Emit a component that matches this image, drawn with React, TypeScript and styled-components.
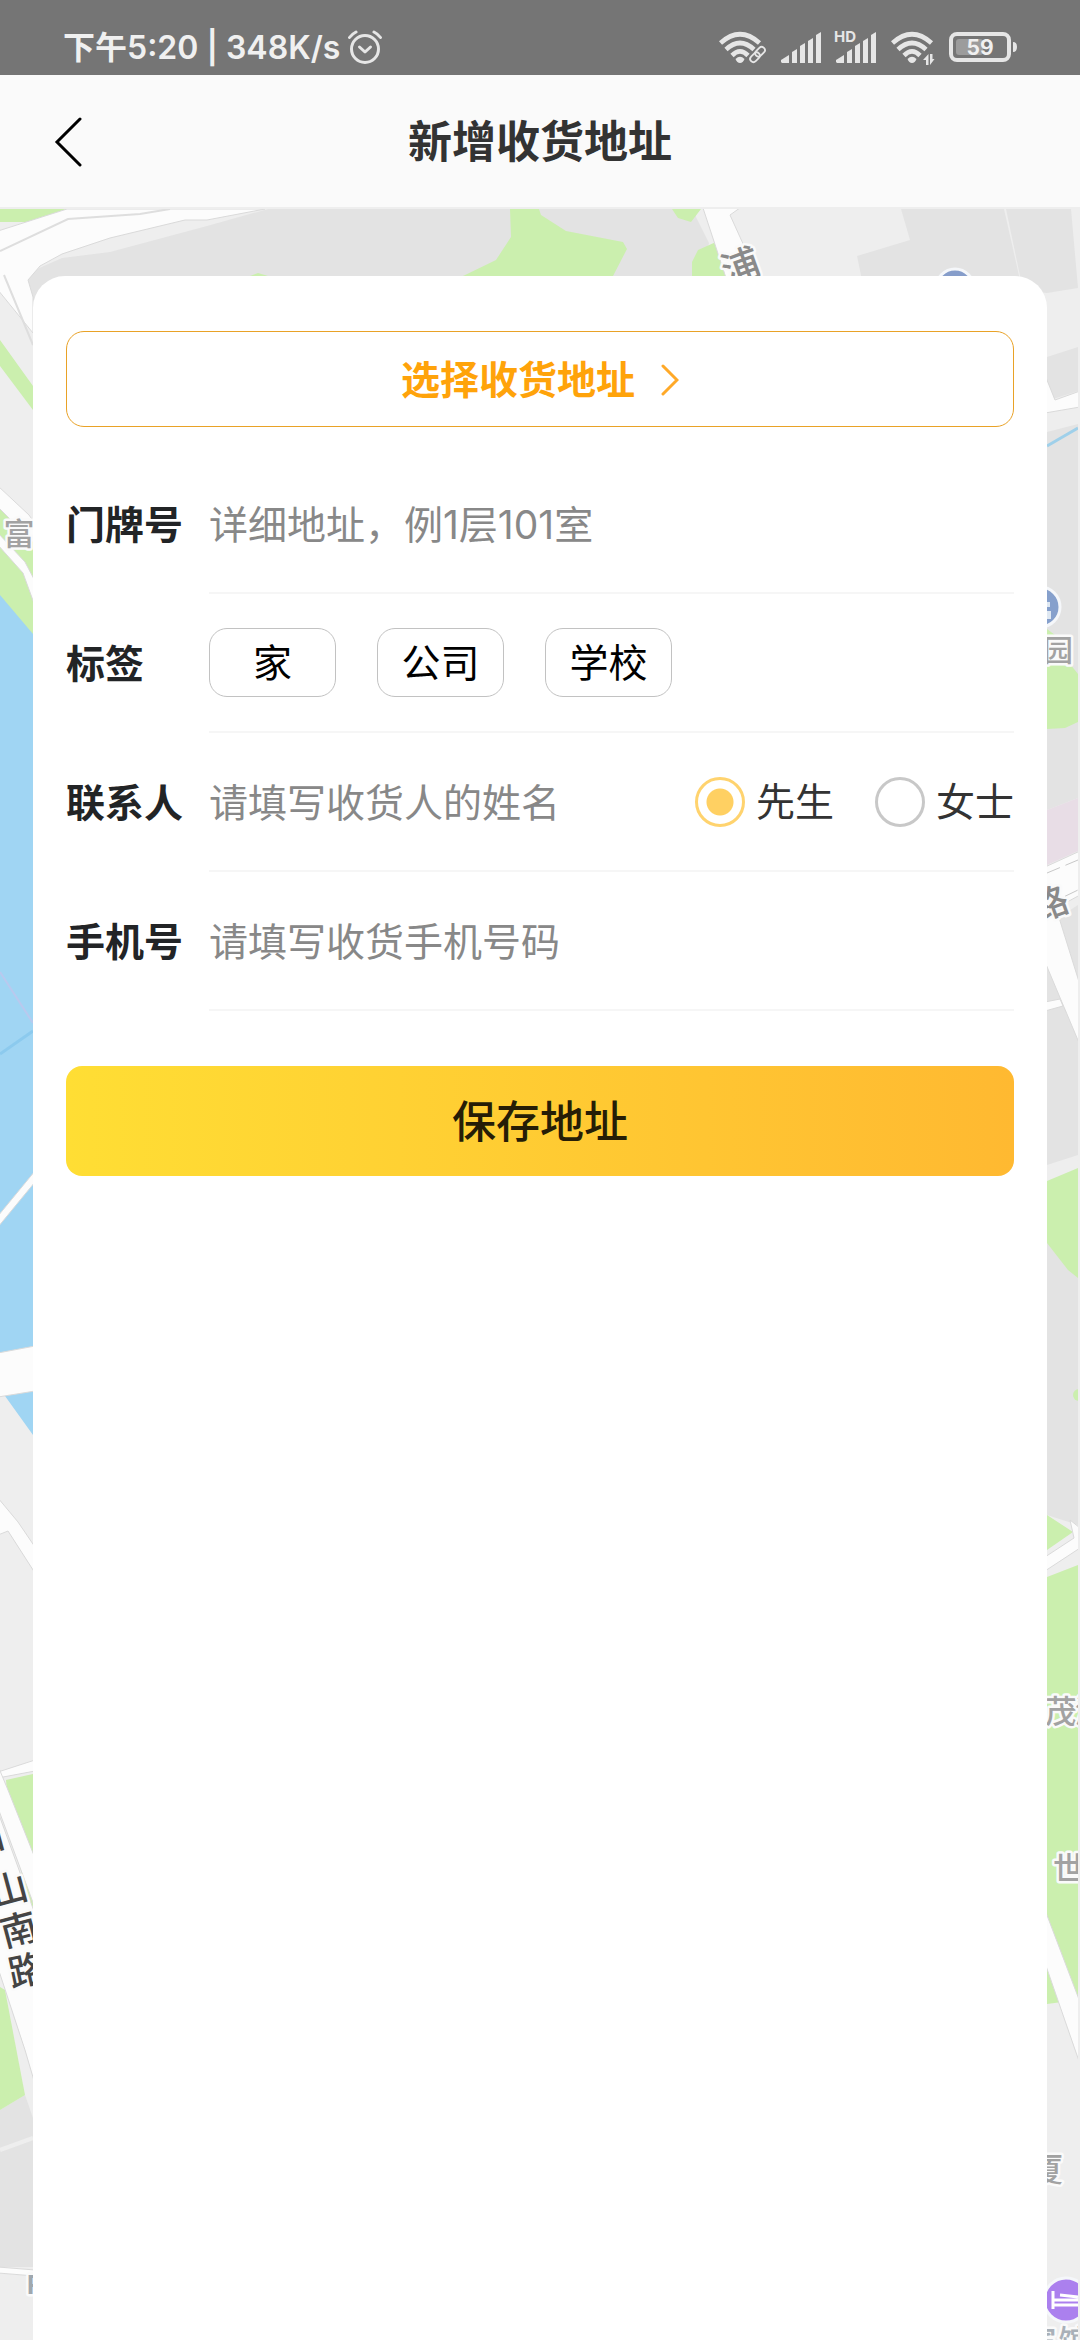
import { useState } from "react";
import styled, { createGlobalStyle } from "styled-components";

const GlobalStyle = createGlobalStyle`
  * {
    box-sizing: border-box;
  }
  body {
    margin: 0;
    background: #eeeeee;
    font-family: Inter, "Noto Sans CJK SC", sans-serif;
  }
  button, input {
    font-family: inherit;
  }
`;

const Page = styled.div`
  min-height: 100vh;
  display: flex;
  flex-direction: column;
`;

const StatusBar = styled.div`
  height: 75px;
  padding: 20px 63px 0;
  display: flex;
  align-items: center;
  justify-content: space-between;
  background: #757575;
  color: #f0f0f0;
`;

const StatusGroup = styled.div<{ $gap: number }>`
  display: flex;
  align-items: center;
  gap: ${({ $gap }) => $gap}px;
`;

const StatusText = styled.span`
  font-size: 32px;
  line-height: 40px;
  font-weight: 600;
  white-space: pre;
`;

const Header = styled.header`
  height: 134px;
  padding: 2px 40px 0;
  display: grid;
  grid-template-columns: 1fr auto 1fr;
  align-items: center;
  background: #fafafa;
  border-bottom: 2px solid #eeeeee;
`;

const BackButton = styled.button`
  width: 56px;
  height: 64px;
  padding: 0;
  border: none;
  background: none;
  display: flex;
  align-items: center;
  justify-content: center;
`;

const Title = styled.h1`
  margin: 0;
  font-size: 44px;
  line-height: 64px;
  font-weight: 700;
  color: #333333;
`;

const MapArea = styled.div`
  position: relative;
  flex: 1;
  display: flex;
  flex-direction: column;
  padding: 67px 33px 0;
  overflow: hidden;
`;

const MapSvg = styled.svg`
  position: absolute;
  top: 0;
  left: 0;
  width: 100%;
  height: 100%;
  font-family: "Noto Sans CJK SC", sans-serif;
`;

const Card = styled.form`
  position: relative;
  flex: 1;
  padding: 55px 33px;
  background: #ffffff;
  border-radius: 32px 32px 0 0;
`;

const SelectButton = styled.button`
  width: 100%;
  height: 96px;
  padding: 2px 0 0;
  margin-bottom: 28px;
  display: flex;
  align-items: center;
  justify-content: center;
  gap: 26px;
  border: 1px solid #e9a227;
  border-radius: 18px;
  background: #ffffff;
  color: #ffa30a;
  font-size: 39px;
  line-height: 56px;
  font-weight: 700;
`;

const Row = styled.div`
  height: 139px;
  display: flex;
`;

const RowLabel = styled.label`
  width: 143px;
  display: flex;
  align-items: center;
  font-size: 39px;
  line-height: 56px;
  font-weight: 700;
  color: #222426;
`;

const Field = styled.div<{ $gap?: number }>`
  flex: 1;
  min-width: 0;
  display: flex;
  align-items: center;
  gap: ${({ $gap }) => $gap || 0}px;
  border-bottom: 2px solid #f6f6f6;
`;

const TextInput = styled.input`
  flex: 1;
  min-width: 0;
  height: 80px;
  padding: 2px 0 0;
  border: none;
  outline: none;
  background: none;
  font-size: 39px;
  color: #222426;
  &::placeholder {
    color: #888888;
    opacity: 1;
  }
`;

const TagButton = styled.button<{ $active: boolean }>`
  width: 127px;
  height: 69px;
  padding: 0;
  border: 1px solid ${({ $active }) => ($active ? "#ffd064" : "#c2c2c2")};
  border-radius: 18px;
  background: #ffffff;
  color: #000000;
  font-size: 39px;
  line-height: 56px;
`;

const RadioLabel = styled.label`
  display: flex;
  align-items: center;
  gap: 11px;
  font-size: 39px;
  line-height: 56px;
  color: #333333;
`;

const Radio = styled.input`
  appearance: none;
  width: 50px;
  height: 50px;
  margin: 0;
  border: 3px solid #c8c8c8;
  border-radius: 50%;
  background: #ffffff;
  &:checked {
    border-color: #ffd36e;
    background: radial-gradient(circle, #ffd062 13px, #ffffff 14px);
  }
`;

const SaveButton = styled.button`
  width: 100%;
  height: 110px;
  padding: 2px 0 0;
  margin-top: 55px;
  border: none;
  border-radius: 16px;
  background: linear-gradient(90deg, #ffde34, #ffb931);
  color: #261d06;
  font-size: 44px;
  line-height: 64px;
  font-weight: 500;
`;

const AlarmIcon = () => (
  <svg width="36" height="36" viewBox="0 0 36 36" fill="none" stroke="#e6e6e6" strokeWidth="3" strokeLinecap="round">
    <circle cx="18" cy="19" r="13.5" />
    <path d="M12.5 17l5.5 5 5.5-5" strokeLinejoin="round" />
    <path d="M2.5 7.5Q5 4 9 2M33.5 7.5Q31 4 27 2" />
  </svg>
);

const WifiArcs = () => (
  <>
    <g fill="none" stroke="#e6e6e6" strokeWidth="4.6">
      <path d="M1.5 12Q21 -5.5 40.500 12" />
      <path d="M7 18.500Q21 5.500 35 18.500" />
      <path d="M13 24.500Q21 16.500 29 24.500" />
    </g>
    <path d="M16.500 28Q21 23.500 25.500 28Q24 32 21 32Q18 32 16.500 28z" fill="#e6e6e6" />
  </>
);

const WifiLinkIcon = () => (
  <svg width="48" height="34" viewBox="0 0 48 34">
    <WifiArcs />
    <path d="M31 33L46 18" stroke="#757575" strokeWidth="11" strokeLinecap="round" />
    <g fill="none" stroke="#e6e6e6" strokeWidth="1.8">
      <rect x="35.500" y="17.500" width="11" height="6.500" rx="3.200" transform="rotate(-45 41 20.700)" />
      <rect x="30.500" y="23" width="11" height="6.500" rx="3.200" transform="rotate(-45 36 26.200)" />
    </g>
  </svg>
);

const WifiDataIcon = () => (
  <svg width="44" height="34" viewBox="0 0 44 34">
    <WifiArcs />
    <path d="M31 23h13v11h-13z" fill="#757575" />
    <path d="M35 34h2.500v-11l-5.500 6h3zM39 23h2.500v5h2l-4.500 6z" fill="#e6e6e6" />
  </svg>
);

const SignalIcon = ({ hd }: { hd?: boolean }) => (
  <svg width="41" height="34" viewBox="0 0 41 34" fill="#e6e6e6" overflow="visible">
    <path d="M0 31v-2l8-5v8h-7z" />
    <path d="M11 32v-11l5-3v14z" />
    <path d="M19 32v-17l5-3v20z" />
    <path d="M27 32v-22l5-3v25z" />
    <path d="M35 32v-28l5-3v31z" />
    {hd && (
      <>
        <path d="M-3 -1h25v13h-5v3h-20z" fill="#757575" />
        <text x="-2" y="11" fontSize="15" fontWeight="700">
          HD
        </text>
      </>
    )}
  </svg>
);

const BatteryIcon = () => (
  <svg width="68" height="34" viewBox="0 0 68 34">
    <rect x="2" y="3" width="58" height="26" rx="6" fill="none" stroke="#e6e6e6" strokeWidth="4" />
    <rect x="7" y="8" width="27" height="16" rx="3" fill="#9c9c9c" />
    <path d="M64 11q4 0 4 5t-4 5z" fill="#e6e6e6" />
    <text x="31" y="24" fontSize="21" fontWeight="700" textAnchor="middle" fill="#f0f0f0">
      59
    </text>
  </svg>
);

// 卡片后面的地图
const MapBackground = () => (
  <MapSvg viewBox="0 209 1080 2131" preserveAspectRatio="xMidYMin slice" aria-hidden="true">
    <rect x="0" y="209" width="1080" height="2131" fill="#eeeeee" />

    <g fill="#e3e3e3">
      <path d="M268 209L207 226L110 252L62 258L28 273L26 300H700V276L709 243L696 217V209z" />
      <path d="M901 209L910 240L857 256L862 280H1020L1004 209zM1006 209L1023 290L1047 293L1078 288L1071 209z" />
      <path d="M1047 357L1078 347V391L1047 401zM1047 432L1078 424V798L1047 810z" />
      <path d="M1047 925L1078 905V1155L1047 1165z" />
      <path d="M1047 1240L1078 1270V1525L1047 1515z" />
      <path d="M0 2110L25 2095L33 2118V2267H0z" />
    </g>

    <g fill="#cbefae">
      <path d="M0 209H67L28 222H0z" />
      <path d="M510 209L511 237L496 260L463 276V290H613V276L627 249L623 242L566 231L541 215L539 209z" />
      <path d="M672 209H701L691 222L678 218zM716 242L698 250L692 262V290H730z" />
      <path d="M250 276L258 273L268 276z" />
      <path d="M0 340L33 386V410L0 366zM0 500L33 530V640L0 600z" />
      <path d="M6 1780L33 1774V1915L10 1830z" />
      <path d="M0 1987L5 1990L25 2095L0 2110z" />
      <path d="M1047 629L1055 635L1070 664L1078 674V722L1065 728L1047 729z" />
      <path d="M1047 1181L1078 1168V1278L1068 1270L1047 1243z" />
      <path d="M1047 1515L1073 1532L1047 1550zM1047 1577L1078 1565V1995L1062 2002L1047 2004z" />
      <circle cx="1079" cy="1395" r="6" />
    </g>

    <path d="M0 595L33 634V1435L5 1396L0 1391z" fill="#a0d5f3" />
    <path d="M0 972L33 1023" stroke="#b9c9ee" strokeWidth="2" />
    <path d="M0 1054L33 1031" stroke="#8ccaee" strokeWidth="3" />
    <path d="M1047 446L1078 428" stroke="#9fd0ea" strokeWidth="3" />
    <path d="M1047 810L1078 798V851L1047 865z" fill="#e8dde6" />
    <path d="M0 2150L33 2138M1047 1170L1078 1158" stroke="#eeeeee" strokeWidth="4" />

    <g fill="#fcfcfc" stroke="#dadada" strokeWidth="1">
      <path d="M-2 231L67 209H265L207 220L185 220L110 238L62 254L40 266L28 280L33 297V333L-2 290z" />
      <path d="M702 205H744L730 215L764 290H730z" />
      <path d="M-2 486L29 515L36 525V545L-2 507zM-2 533L25 562L35 581V606L23 573L-2 545z" />
      <path d="M-2 1216L35 1171V1182L-2 1227zM-2 1353L35 1346V1391L-2 1397z" />
      <path d="M-2 1498L18 1522L35 1547V1573L8 1531L-2 1535z" />
      <path d="M-2 1772L35 1760V1771L-2 1778z" />
      <path d="M-2 1766L8 1790L35 1858V1908L-2 1808z" />
      <path d="M-2 1812L35 1914V2084L25 2050L-2 1968z" />
      <path d="M-2 2267L35 2270V2276L-2 2273z" />
      <path d="M1045 375L1055 400L1080 391V407L1045 413z" />
      <path d="M1045 867L1080 851V895L1056 908L1080 985V1045L1045 962z" />
      <path d="M1045 1002L1060 999L1063 1006L1045 1011z" />
      <path d="M1045 1557L1074 1538L1070 1520L1080 1528V1548L1045 1571z" />
      <path d="M1045 1910L1080 2002V2064L1045 1963z" />
    </g>
    <path d="M0 251L68 219L140 214L170 209M4 275L33 345" stroke="#dedede" strokeWidth="2" fill="none" />
    <path d="M1047 873L1078 860M1047 905L1078 890" stroke="#c8c8c8" strokeDasharray="14 6" />

    <g stroke="#f5f7fa" strokeWidth="3">
      <circle cx="955" cy="288" r="19" fill="#869dca" />
      <circle cx="1040" cy="607" r="20" fill="#86a0cc" />
      <circle cx="1066" cy="2300" r="22" fill="#ab80ee" />
    </g>
    <path d="M1046 602h4v5h-4zM1046 611h5v8h-5z" fill="#dfe8f2" />
    <path d="M1053 2291v18M1053 2305h26M1053 2300h26M1060 2295l18 2" stroke="#ffffff" strokeWidth="3" fill="none" />

    {/* 地名 */}
    <g
      stroke="#fafafa"
      strokeWidth="5"
      strokeLinejoin="round"
      paintOrder="stroke"
      fontWeight="500"
      fill="#a2a2a2"
      textAnchor="middle"
    >
      <text transform="translate(741 267) rotate(-20)" y="13" fontSize="38" fill="#8a8a8a">浦</text>
      <text x="19" y="545" fontSize="31">富</text>
      <text x="1058" y="661" fontSize="30">园</text>
      <text transform="translate(1050 904) rotate(-20)" y="13" fontSize="36" fill="#8a8a8a">路</text>
      <text x="1061" y="1723" fontSize="32">茂</text>
      <text x="1091" y="1723" fontSize="32">滨</text>
      <text x="1069" y="1880" fontSize="32">世</text>
      <text x="1047" y="2181" fontSize="32">厦</text>
      <text x="1041" y="2352" fontSize="31" fill="#a9b0b8">宾</text>
      <text x="1074" y="2352" fontSize="31" fill="#a9b0b8">馆</text>
      <text x="35" y="2294" fontSize="26" fontWeight="700" fill="#9fa8b0">P</text>
      <g fontSize="37" fill="#444444">
        <text transform="translate(-12 1848) rotate(-15)" y="13">中</text>
        <text transform="translate(9 1890) rotate(-15)" y="13">山</text>
        <text transform="translate(19 1930) rotate(-15)" y="13">南</text>
        <text transform="translate(27 1971) rotate(-12)" y="13">路</text>
      </g>
    </g>
    <rect x="1078" y="209" width="2" height="2131" fill="#eeeeee" />
  </MapSvg>
);

const tags = ["家", "公司", "学校"];
const genders = ["先生", "女士"];

export default function App() {
  const [tag, setTag] = useState("");
  const [gender, setGender] = useState("先生");
  const [door, setDoor] = useState("");
  const [name, setName] = useState("");
  const [phone, setPhone] = useState("");

  return (
    <>
      <GlobalStyle />
      <Page>
        <StatusBar>
          <StatusGroup $gap={7}>
            <StatusText>下午5:20 | 348K/s</StatusText>
            <AlarmIcon />
          </StatusGroup>
          <StatusGroup $gap={14}>
            <WifiLinkIcon />
            <SignalIcon />
            <SignalIcon hd />
            <WifiDataIcon />
            <BatteryIcon />
          </StatusGroup>
        </StatusBar>
        <Header>
          <BackButton type="button" aria-label="返回">
            <svg width="28" height="50" viewBox="0 0 28 50" fill="none" stroke="#000000" strokeWidth="3">
              <path d="M26 2L3 25L26 48" strokeLinecap="round" />
            </svg>
          </BackButton>
          <Title>新增收货地址</Title>
        </Header>
        <MapArea>
          <MapBackground />
          <Card onSubmit={(e) => e.preventDefault()}>
            <SelectButton type="button">
              选择收货地址
              <svg width="18" height="32" viewBox="0 0 18 32" fill="none" stroke="#ffa928" strokeWidth="3">
                <path d="M2 2L16 16L2 30" strokeLinecap="round" />
              </svg>
            </SelectButton>
            <Row>
              <RowLabel htmlFor="door">门牌号</RowLabel>
              <Field>
                <TextInput
                  id="door"
                  value={door}
                  onChange={(e) => setDoor(e.target.value)}
                  placeholder="详细地址，例1层101室"
                />
              </Field>
            </Row>
            <Row>
              <RowLabel as="span">标签</RowLabel>
              <Field $gap={41}>
                {tags.map((item) => (
                  <TagButton key={item} type="button" $active={tag === item} onClick={() => setTag(item)}>
                    {item}
                  </TagButton>
                ))}
              </Field>
            </Row>
            <Row>
              <RowLabel htmlFor="name">联系人</RowLabel>
              <Field $gap={41}>
                <TextInput
                  id="name"
                  value={name}
                  onChange={(e) => setName(e.target.value)}
                  placeholder="请填写收货人的姓名"
                />
                {genders.map((item) => (
                  <RadioLabel key={item}>
                    <Radio type="radio" name="gender" checked={gender === item} onChange={() => setGender(item)} />
                    {item}
                  </RadioLabel>
                ))}
              </Field>
            </Row>
            <Row>
              <RowLabel htmlFor="phone">手机号</RowLabel>
              <Field>
                <TextInput
                  id="phone"
                  type="tel"
                  value={phone}
                  onChange={(e) => setPhone(e.target.value)}
                  placeholder="请填写收货手机号码"
                />
              </Field>
            </Row>
            <SaveButton type="submit">保存地址</SaveButton>
          </Card>
        </MapArea>
      </Page>
    </>
  );
}
